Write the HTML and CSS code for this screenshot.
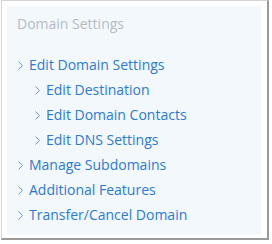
FILE: index.html
```html
<!DOCTYPE html>
<html>
<head>
    <meta charset="UTF-8">
    <title>Domain Settings</title>
    <link rel="stylesheet" href="styles.css">
</head>
<body>
    <div class="frame">
        <div class="panel">
            <h2 class="panel-title">Domain Settings</h2>
            <ul class="menu">
                <li><a href="#"><svg class="chev" width="5" height="9" viewBox="0 0 5 9"><polyline points="0.5,0.5 4.5,4.5 0.5,8.5"/></svg>Edit Domain Settings</a>
                    <ul class="submenu">
                        <li><a href="#"><svg class="chev" width="5" height="9" viewBox="0 0 5 9"><polyline points="0.5,0.5 4.5,4.5 0.5,8.5"/></svg>Edit Destination</a></li>
                        <li><a href="#"><svg class="chev" width="5" height="9" viewBox="0 0 5 9"><polyline points="0.5,0.5 4.5,4.5 0.5,8.5"/></svg>Edit Domain Contacts</a></li>
                        <li><a href="#"><svg class="chev" width="5" height="9" viewBox="0 0 5 9"><polyline points="0.5,0.5 4.5,4.5 0.5,8.5"/></svg>Edit DNS Settings</a></li>
                    </ul>
                </li>
                <li><a href="#"><svg class="chev" width="5" height="9" viewBox="0 0 5 9"><polyline points="0.5,0.5 4.5,4.5 0.5,8.5"/></svg>Manage Subdomains</a></li>
                <li><a href="#"><svg class="chev" width="5" height="9" viewBox="0 0 5 9"><polyline points="0.5,0.5 4.5,4.5 0.5,8.5"/></svg>Additional Features</a></li>
                <li><a href="#"><svg class="chev" width="5" height="9" viewBox="0 0 5 9"><polyline points="0.5,0.5 4.5,4.5 0.5,8.5"/></svg>Transfer/Cancel Domain</a></li>
            </ul>
        </div>
    </div>
</body>
</html>
```
FILE: styles.css
```css
body {
    margin: 0;
    background-color: white;
    font-family: "Open Sans", Arial, sans-serif;
}
.frame {
    width: 268px;
    height: 240px;
    border: 1px solid #d4d4d4;
    border-right: 2px solid #9a9a9a;
    border-bottom: 2px solid #9a9a9a;
    background-color: white;
    padding: 5px 6px 3px 5px;
    box-sizing: border-box;
    margin-left: 1px;
}
.panel {
    background-color: #f3f8fc;
    height: 100%;
    padding: 8px 10px 0 10px;
    box-sizing: border-box;
}
.panel-title {
    margin: 0 0 18px 0;
    font-size: 14px;
    font-weight: normal;
    color: #b4bcc4;
    line-height: 20px;
}
.menu, .submenu {
    list-style: none;
    margin: 0;
    padding: 0;
}
.submenu {
    padding-left: 17px;
}
.menu a {
    display: flex;
    align-items: center;
    color: #2b7bd0;
    text-decoration: none;
    font-size: 14px;
    line-height: 25px;
}
.chev {
    margin: 1px 6px 0 1px;
    fill: none;
    stroke: #6b9bd0;
    stroke-width: 1;
}
```
